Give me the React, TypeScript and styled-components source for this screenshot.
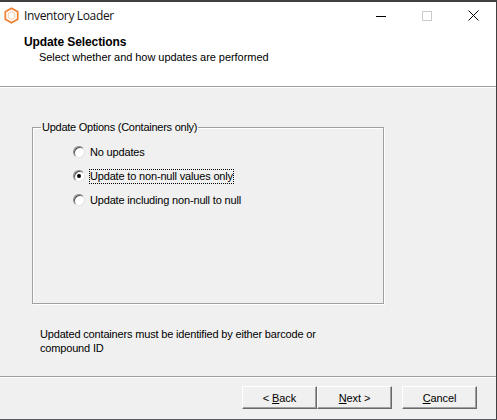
import React from 'react';
import styled, { createGlobalStyle } from 'styled-components';

const Global = createGlobalStyle`
  html, body { margin: 0; padding: 0; width: 497px; height: 420px; overflow: hidden; background: #f0f0f0; }
  * { box-sizing: border-box; }
`;

const Win = styled.div`
  width: 497px; height: 420px; display: flex; flex-direction: column;
  background: #f0f0f0; border-top: 2px solid #404040; border-right: 1px solid #404040;
  border-bottom: 1px solid #5a5a60; font-family: "Liberation Sans", Arial, sans-serif; font-size: 11px; color: #000;
`;
const TitleBar = styled.div`
  height: 27px; flex: none; background: #fff; display: flex; align-items: center; padding-left: 4px;
`;
const TitleText = styled.span`
  font-family: "Open Sans", sans-serif; font-size: 12px; margin: 0 0 1px 5px; color: #111; letter-spacing: -0.35px; flex: 1;
`;
const WinBtn = styled.div`
  width: 46px; height: 27px; display: flex; align-items: center; justify-content: center;
  svg { display: block; }
`;
const Header = styled.div`
  height: 58px; flex: none; background: #fff; border-bottom: 1px solid #a0a0a0; padding: 7px 0 0 24px;
`;
const HeaderTitle = styled.div`
  font-weight: 700; font-size: 12px; line-height: 14px; letter-spacing: -0.1px; margin-top: -1px;
`;
const HeaderSub = styled.div`
  line-height: 16px; margin: 0 0 0 15px; letter-spacing: -0.05px;
`;
const Body = styled.div`
  flex: 1; padding: 32px 0 0 32px; display: flex; flex-direction: column; border-top: 1px solid #fff;
`;
const Group = styled.fieldset`
  width: 352px; height: 184px; margin: 0; padding: 0; flex: none;
  border: 1px solid #a0a0a0; box-shadow: 1px 1px 0 #fff, inset 1px 1px 0 #fff;
  border-radius: 0; min-width: 0;
`;
const Legend = styled.legend`
  padding: 0 1px; margin-left: 8px; line-height: 14px; letter-spacing: -0.25px;
`;
const Options = styled.div`
  display: flex; flex-direction: column; padding: 6px 0 0 40px;
`;
const Option = styled.div`
  display: flex; align-items: center; height: 24px;
`;
const RadioDot = styled.span<{ $on?: boolean }>`
  width: 12px; height: 12px; border-radius: 50%; flex: none; margin-right: 4px; position: relative;
  background: #fff; border: 1px solid #8a8a8a; border-right-color: #e4e4e4; border-bottom-color: #e4e4e4;
  box-shadow: inset 1px 1px 0 #555;
  &::after {
    content: ""; display: ${p => (p.$on ? 'block' : 'none')}; position: absolute; left: 3px; top: 3px;
    width: 4px; height: 4px; border-radius: 50%; background: #000;
  }
`;
const OptionLabel = styled.span<{ $focus?: boolean }>`
  padding: 0 1px; line-height: 15px; outline: ${p => (p.$focus ? '1px dotted #000' : 'none')}; outline-offset: -1px;
  letter-spacing: -0.17px;
`;
const Note = styled.div`
  width: 290px; margin: 23px 0 0 8px; line-height: 14px; letter-spacing: -0.17px;
`;
const Sep = styled.div`
  height: 1px; flex: none; background: #a0a0a0; box-shadow: 0 1px 0 #fff; margin: 21px 0 0 -32px; width: 496px;
`;
const Footer = styled.div`
  display: flex; justify-content: flex-end; padding: 9px 19px 0 0; margin-left: -32px; width: 496px;
`;
const Btn = styled.button<{ $gap?: number }>`
  width: 75px; height: 23px; padding: 0; margin: 0 0 0 ${p => p.$gap ?? 0}px;
  font: 11px "Liberation Sans", Arial, sans-serif; letter-spacing: -0.1px; color: #000; background: #f0f0f0;
  border: 1px solid; border-color: #fff #696969 #696969 #fff;
  box-shadow: inset -1px -1px 0 #a0a0a0;
  u { text-underline-offset: 1px; }
`;

const Logo = () => (
  <svg width="15" height="17" viewBox="0 0 16 18" fill="none">
    <path d="M8 1.2 L14.6 5 V13 L8 16.8 L1.4 13 V5 Z" stroke="#f07f2e" strokeWidth="1.8" />
    <path d="M8 4.6 L11.4 6.6 V11.4 L8 13.4 L4.6 11.4 V6.6 Z" stroke="#f8c49c" strokeWidth="1" />
  </svg>
);

export default function App() {
  return (
    <Win>
      <Global />
      <TitleBar>
        <Logo />
        <TitleText>Inventory Loader</TitleText>
        <WinBtn>
          <svg width="10" height="10" viewBox="0 0 10 10"><path d="M0 5.5H10" stroke="#000" /></svg>
        </WinBtn>
        <WinBtn>
          <svg width="10" height="10" viewBox="0 0 10 10"><rect x=".5" y=".5" width="9" height="9" fill="none" stroke="#ccc" /></svg>
        </WinBtn>
        <WinBtn>
          <svg width="11" height="11" viewBox="0 0 11 11"><path d="M.5.5l10 10M10.5.5l-10 10" stroke="#000" fill="none" /></svg>
        </WinBtn>
      </TitleBar>
      <Header>
        <HeaderTitle>Update Selections</HeaderTitle>
        <HeaderSub>Select whether and how updates are performed</HeaderSub>
      </Header>
      <Body>
        <Group>
          <Legend>Update Options (Containers only)</Legend>
          <Options>
            <Option><RadioDot /><OptionLabel>No updates</OptionLabel></Option>
            <Option><RadioDot $on /><OptionLabel $focus>Update to non-null values only</OptionLabel></Option>
            <Option><RadioDot /><OptionLabel>Update including non-null to null</OptionLabel></Option>
          </Options>
        </Group>
        <Note>Updated containers must be identified by either barcode or compound ID</Note>
        <Sep />
        <Footer>
          <Btn>&lt; <u>B</u>ack</Btn>
          <Btn><u>N</u>ext &gt;</Btn>
          <Btn $gap={10}><u>C</u>ancel</Btn>
        </Footer>
      </Body>
    </Win>
  );
}
